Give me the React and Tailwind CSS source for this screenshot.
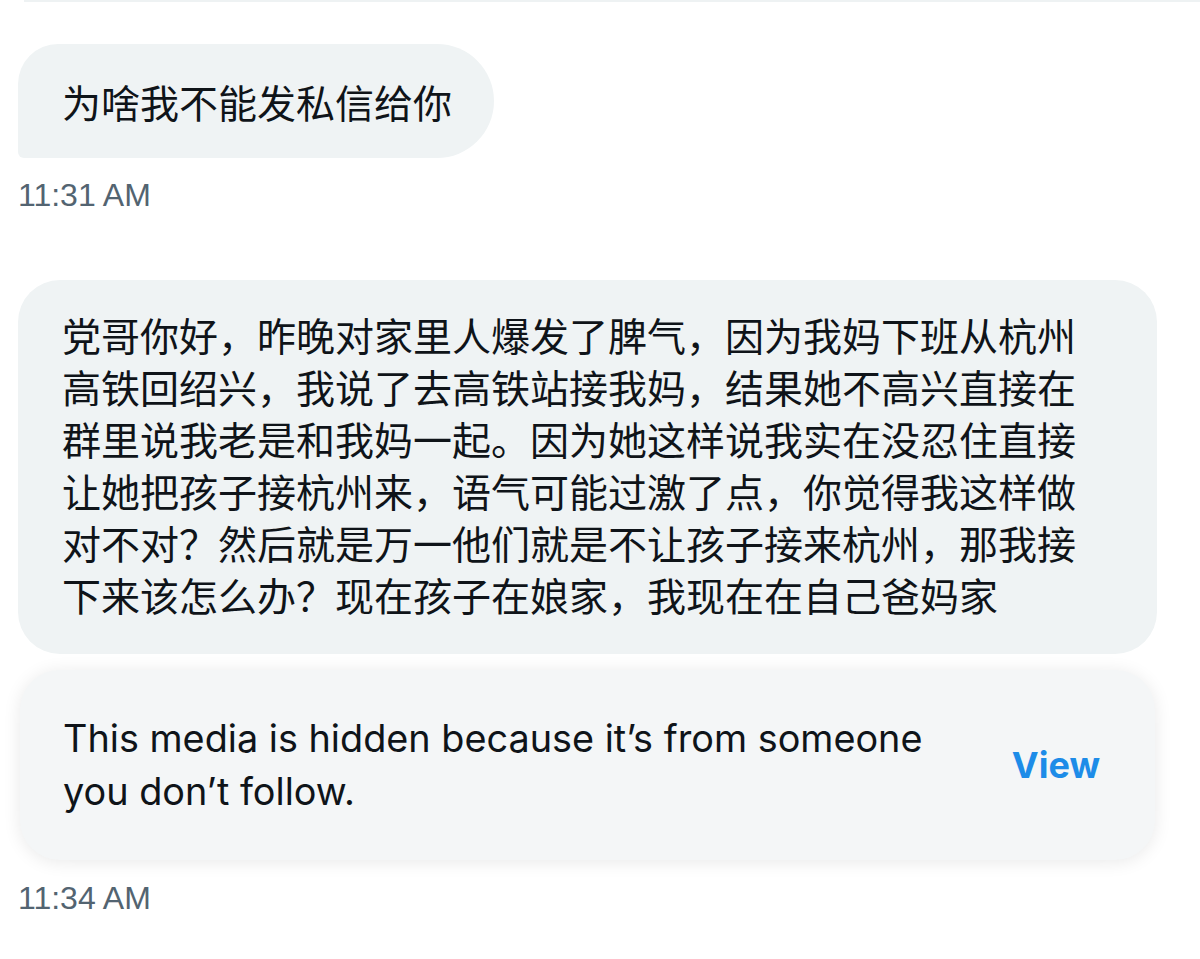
export default function App() {
  const cjk = { fontFamily: '"Noto Sans CJK SC", "Noto Sans", sans-serif' };
  return (
    <div className="w-[1200px] h-[959px] bg-white overflow-hidden flex flex-col">
      <div className="h-[2px] bg-[#eef2f3] ml-[24px]" />
      <div className="flex flex-col px-[18px]">
        <div className="mt-[42px] self-start bg-[#eff3f4] rounded-tl-[40px] rounded-tr-[57px] rounded-br-[57px] rounded-bl-[6px] pl-[44px] pr-[42px] py-[31px]">
          <p className="text-[39px] leading-[52px] text-[#0f1419]" style={cjk}>为啥我不能发私信给你</p>
        </div>
        <div className="mt-[18px] text-[32px] leading-[38px] text-[#536471] font-['Liberation_Sans',Arial,sans-serif]">11:31 AM</div>

        <div className="mt-[66px] w-[1139px] bg-[#eff3f4] rounded-[42px] pl-[44px] pr-[60px] pt-[28px] pb-[34px]">
          <p className="text-[39px] leading-[52px] text-[#0f1419]" style={cjk}>
            党哥你好，昨晚对家里人爆发了脾气，因为我妈下班从杭州高铁回绍兴，我说了去高铁站接我妈，结果她不高兴直接在群里说我老是和我妈一起。因为她这样说我实在没忍住直接让她把孩子接杭州来，语气可能过激了点，你觉得我这样做对不对？然后就是万一他们就是不让孩子接来杭州，那我接下来该怎么办？现在孩子在娘家，我现在在自己爸妈家
          </p>
        </div>

        <div className="mt-[16px] ml-[2px] w-[1135px] h-[190px] bg-[#f4f6f7] rounded-[40px] shadow-[0_2px_18px_rgba(0,0,0,0.09)] flex items-center justify-between pl-[43px] pr-[55px]">
          <p className="w-[900px] text-[37.8px] leading-[53px] text-[#0f1419] font-['Inter','Liberation_Sans',sans-serif]">
            This media is hidden because it’s from someone you don’t follow.
          </p>
          <span className="text-[36px] font-bold text-[#1d8ce8] font-['Inter','Liberation_Sans',sans-serif]">View</span>
        </div>

        <div className="mt-[19px] text-[32px] leading-[38px] text-[#536471] font-['Liberation_Sans',Arial,sans-serif]">11:34 AM</div>
      </div>
    </div>
  );
}
